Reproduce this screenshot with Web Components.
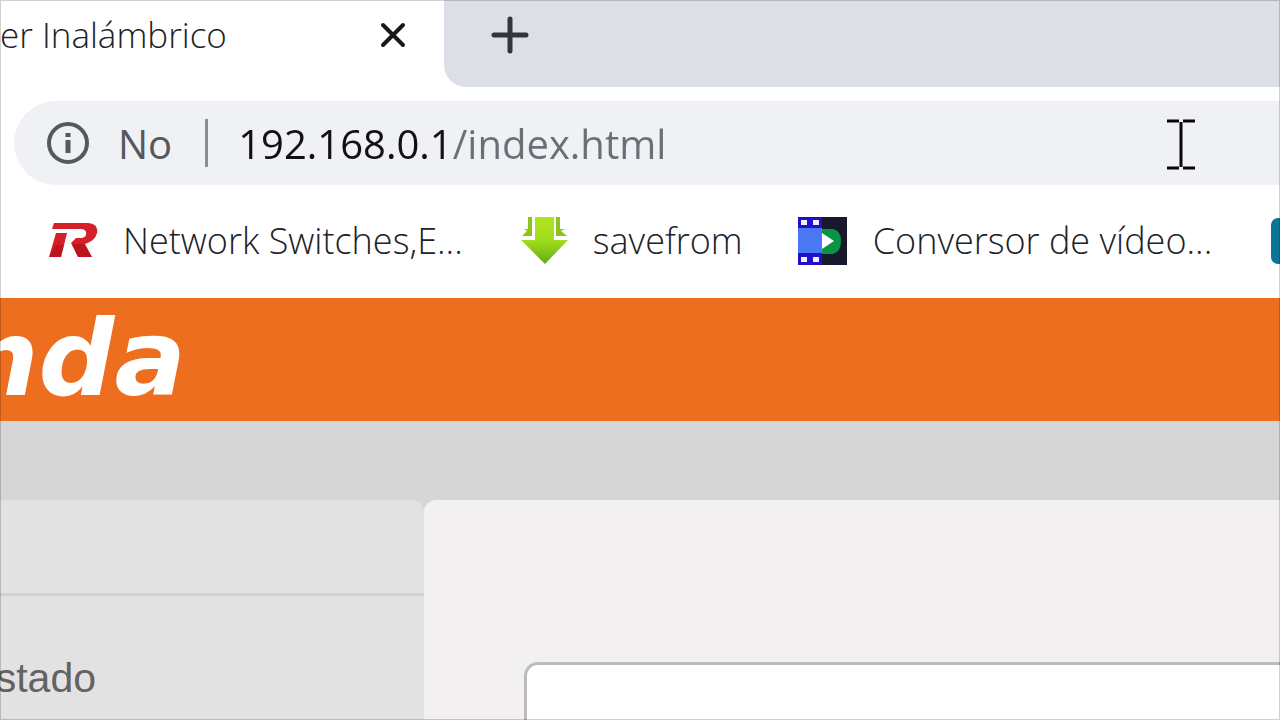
<!DOCTYPE html>
<html lang="es">
<head>
<meta charset="utf-8">
<title>Router Inalámbrico</title>
<style>
html, body { margin: 0; height: 100%; }
body { overflow: hidden; background: #fff; font-family: "Open Sans", "Noto Sans", sans-serif; }
</style>
</head>
<body>
<browser-window>
  <tab-strip slot="tabs">er Inalámbrico</tab-strip>
  <address-bar slot="toolbar" url="192.168.0.1/index.html">No</address-bar>
  <bookmarks-bar slot="bookmarks">
    <bookmark-link>
      <svg slot="icon" width="50" height="50" viewBox="0 0 50 50" aria-hidden="true"><path fill="#d3202a" d="M6 7H40Q51 8 49 17Q47 25 37 28L44 41H30L23 27L28 22H34Q39 21 38 16Q37 13 33 13H4ZM8 17H19L13 41H1Z"/><path fill="#b00d16" d="M8 29H16L13 41H1ZM24 28L36 28L44 41H30Z" opacity=".6"/></svg>
      Network Switches,E...
    </bookmark-link>
    <bookmark-link>
      <svg slot="icon" width="50" height="50" viewBox="0 0 50 50" aria-hidden="true"><defs><linearGradient id="g" x2="0" y2="1"><stop stop-color="#b0e41c"/><stop offset=".5" stop-color="#a2dc1e"/><stop offset="1" stop-color="#62ac10"/></linearGradient></defs><path fill="#8cc41c" d="M10 1H14V20H4L9 15L6 13H10ZM42 1H38V20H49L43 15L47 13H42Z"/><path fill="url(#g)" d="M17 1H36V24H50L27 48L3 24H17Z"/></svg>
      savefrom
    </bookmark-link>
    <bookmark-link>
      <svg slot="icon" width="50" height="50" viewBox="0 0 50 50" aria-hidden="true"><path fill="#18192b" d="M0 1H49V49H0Z"/><path fill="#079447" d="M24 13H35Q43 15 43 25Q43 36 35 38H24Z"/><path fill="#2110c8" d="M0 1H24V49H0Z"/><path fill="#4a78f5" d="M0 12H24V37H0Z"/><path fill="#f0edff" d="M3 4H9V9H3ZM15 4H21V9H15ZM3 41H9V46H3ZM15 41H21V46H15Z"/><path fill="#fff" d="M24 17L36 25L24 33Z"/></svg>
      Conversor de vídeo...
    </bookmark-link>
    <bookmark-link>
      <svg slot="icon" width="50" height="50" viewBox="0 0 50 50" aria-hidden="true"><rect x="4" y="2" width="46" height="46" rx="7" fill="#0c7495"/></svg>
    </bookmark-link>
  </bookmarks-bar>
  <router-page>
    <brand-logo slot="brand">nda</brand-logo>
    <a slot="menu" href="#estado">stado</a>
  </router-page>
</browser-window>

<script>
function define(name, markup, setup) {
  const template = document.createElement('template');
  template.innerHTML = markup;
  customElements.define(name, class extends HTMLElement {
    constructor() {
      super();
      this.attachShadow({ mode: 'open' }).append(template.content.cloneNode(true));
    }
    connectedCallback() { if (setup) setup(this); }
  });
}

define('browser-window', `
<style>
:host { display: flex; flex-direction: column; min-height: 100vh; background: #fff; }
:host::after { content: ""; position: fixed; inset: 0; border: 1px solid rgba(0,0,0,.18); pointer-events: none; }
::slotted(router-page) { flex: 1; }
</style>
<slot name="tabs"></slot><slot name="toolbar"></slot><slot name="bookmarks"></slot><slot></slot>`);

define('tab-strip', `
<style>
:host { display: flex; height: 87px; color: #202228; font-size: 35px; font-weight: 300; }
.tab { width: 444px; flex: none; box-sizing: border-box; display: flex; align-items: center; padding: 0 36px 18px 0; }
.title { flex: 1; white-space: nowrap; }
.rest { flex: 1; background: #dddfe7; border-bottom-left-radius: 22px; padding: 0 0 18px 44px; display: flex; align-items: center; }
button { border: 0; padding: 0; background: none; display: flex; }
</style>
<div class="tab"><span class="title"><slot></slot></span>
<button aria-label="Cerrar"><svg width="30" height="30" viewBox="0 0 30 30"><path d="M5 5L25 25M25 5L5 25" stroke="#17191c" stroke-width="4" stroke-linecap="round"/></svg></button></div>
<div class="rest"><button aria-label="Nueva pestaña"><svg width="44" height="44" viewBox="0 0 44 44"><path d="M22 6V38M6 22H38" stroke="#33343c" stroke-width="5" stroke-linecap="round"/></svg></button></div>`);

define('address-bar', `
<style>
:host { display: block; padding: 14px 0 14px 14px; }
.box { height: 84px; border-radius: 42px 0 0 42px; background: #f0f1f4; display: flex; align-items: center; box-sizing: border-box; padding-left: 32px; font-size: 40px; color: #55585d; position: relative; }
button { border: 0; background: none; padding: 0; font: inherit; color: inherit; display: flex; align-items: center; gap: 28px; }
.sep { width: 3px; height: 48px; background: #8b8d91; margin: 0 30px 0 33px; }
input { flex: 1; min-width: 0; border: 0; padding: 0; outline: 0; font: inherit; height: 60px; color: transparent; background: linear-gradient(90deg, #111 0 212px, #6b6e76 212px); -webkit-background-clip: text; background-clip: text; }
.cursor { position: absolute; right: 84px; top: 17px; }
</style>
<div class="box">
<button><svg width="44" height="44" viewBox="0 0 44 44" aria-hidden="true"><circle cx="22" cy="22" r="19" fill="none" stroke="#55585d" stroke-width="4"/><path d="M22 19V32M22 12V16" stroke="#55585d" stroke-width="5"/></svg><span><slot></slot></span></button>
<span class="sep"></span>
<input aria-label="Dirección" spellcheck="false">
<svg class="cursor" width="30" height="52" viewBox="0 0 30 52" aria-hidden="true"><path d="M1 3H13M17 3H29M1 50H13M17 50H29M15 4V49" stroke="#080808" stroke-width="3"/></svg>
</div>`, host => { host.shadowRoot.querySelector('input').value = host.getAttribute('url'); });

define('bookmarks-bar', `
<style>
:host { display: flex; align-items: center; gap: 55px; height: 99px; padding: 0 0 0 48px; box-sizing: border-box; overflow: hidden; }
::slotted(*) { flex: none; margin-bottom: 16px; }
</style><slot></slot>`);

define('bookmark-link', `
<style>
:host { display: block; font-size: 36px; font-weight: 300; color: #202228; }
a { display: flex; align-items: center; gap: 25px; color: inherit; text-decoration: none; white-space: nowrap; }
</style><a href="#"><slot name="icon"></slot><span><slot></slot></span></a>`);

define('brand-logo', `
<style>
:host { display: flex; justify-content: flex-end; width: 186px; font: italic bold 106px/121px "DejaVu Sans", sans-serif; color: #fff; }
</style><slot></slot>`);

define('router-page', `
<style>
:host { display: flex; flex-direction: column; background: #d7d6d7; }
header { height: 123px; background: #ec6e1e; overflow: hidden; }
.body { flex: 1; margin-top: 79px; display: flex; }
nav { width: 424px; background: #e3e2e3; border-radius: 0 12px 0 0; }
.head { height: 93px; border-bottom: 3px solid #d2d1d2; }
.item { display: flex; justify-content: flex-end; width: 96px; padding-top: 58px; }
::slotted(a) { font: 41px/48px "Liberation Sans", Arial, sans-serif; color: #636363; text-decoration: none; }
main { flex: 1; background: #f2f0f1; border-radius: 12px 0 0 0; padding: 162px 0 0 100px; display: flex; }
.panel { flex: 1; background: #fff; border: 3px solid #bdbbbc; border-width: 3px 0 0 3px; border-radius: 14px 0 0 0; }
</style>
<header><slot name="brand"></slot></header>
<div class="body">
<nav><div class="head"></div><div class="item"><slot name="menu"></slot></div></nav>
<main><section class="panel"></section></main>
</div>`);
</script>
</body>
</html>
